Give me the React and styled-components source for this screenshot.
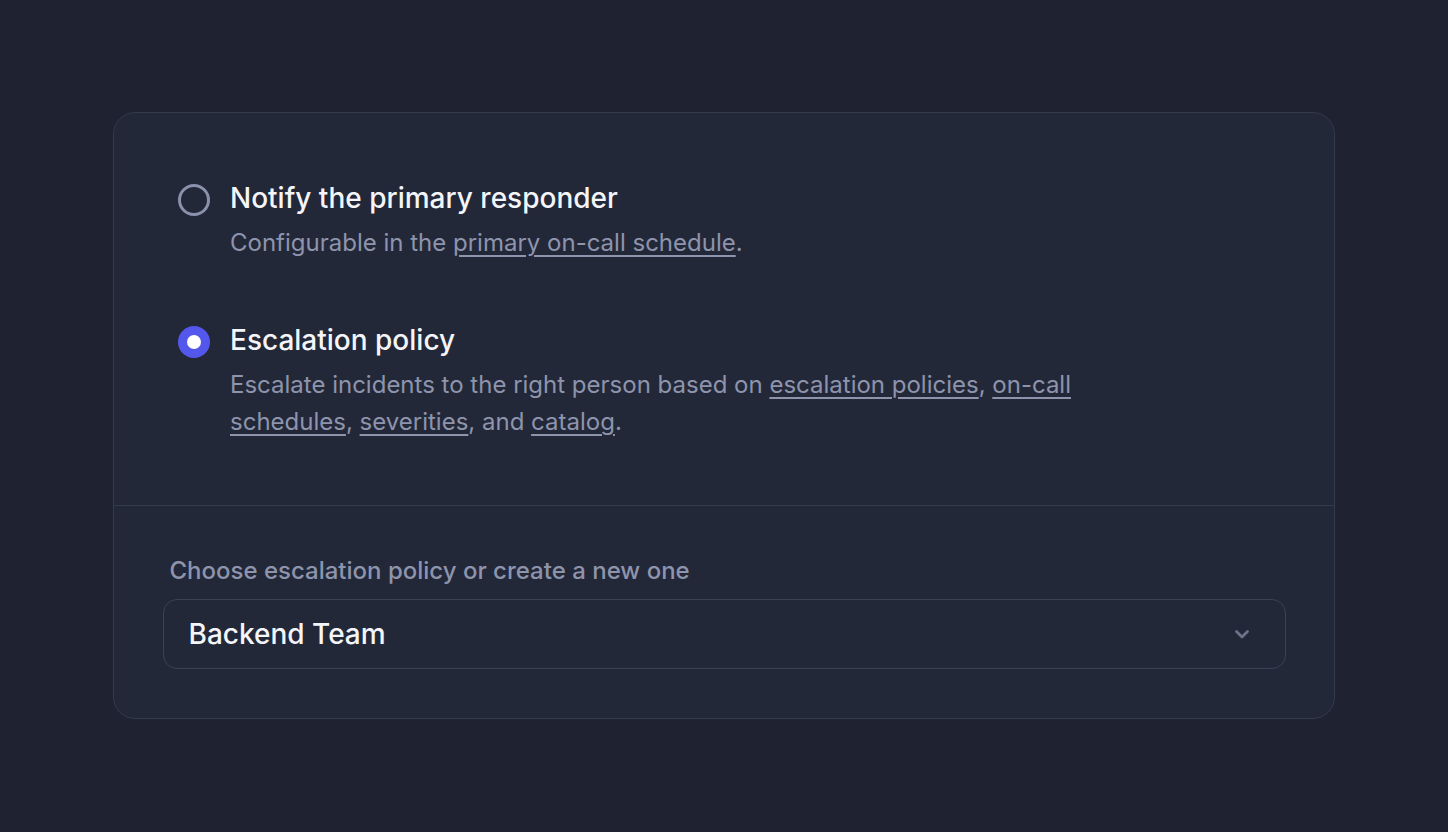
import React from "react";
import styled, { createGlobalStyle } from "styled-components";

const Global = createGlobalStyle`
  html, body { margin: 0; padding: 0; background: #1e2231; }
  body { font-family: Inter, "Noto Sans", sans-serif; -webkit-font-smoothing: antialiased; }
`;

const Page = styled.div`
  min-height: 832px;
  display: flex;
  align-items: flex-start;
  justify-content: center;
  padding-top: 112px;
  box-sizing: border-box;
`;

const Card = styled.div`
  width: 1222px;
  box-sizing: border-box;
  background: #232839;
  border: 1.5px solid #333a4c;
  border-radius: 22px;
  overflow: hidden;
`;

const Options = styled.div`
  display: flex;
  flex-direction: column;
  gap: 61px;
  padding: 67px 64px 65px;
  border-bottom: 1.5px solid #333a4c;
`;

const Option = styled.div`
  display: grid;
  grid-template-columns: 32px 1fr;
  column-gap: 20px;
`;

const Radio = styled.span`
  width: 32px;
  height: 32px;
  box-sizing: border-box;
  border-radius: 50%;
  margin-top: 4px;
  display: flex;
  align-items: center;
  justify-content: center;
  border: ${(p) => (p.$checked ? "none" : "3.5px solid #8a91aa")};
  background: ${(p) => (p.$checked ? "#5457eb" : "transparent")};
  &::after {
    content: "";
    display: ${(p) => (p.$checked ? "block" : "none")};
    width: 14px;
    height: 14px;
    border-radius: 50%;
    background: #ffffff;
  }
`;

const Title = styled.div`
  font-size: 28px;
  line-height: 36px;
  font-weight: 500;
  color: #f4f5f8;
`;

const Desc = styled.div`
  font-size: 24px;
  line-height: 37px;
  color: #8d94ac;
  margin-top: 8px;
  max-width: 860px;
`;

const Link = styled.a`
  color: #8d94ac;
  text-decoration: underline;
  text-underline-offset: 4px;
  text-decoration-thickness: 1.5px;
`;

const Bottom = styled.div`
  display: flex;
  flex-direction: column;
  gap: 12px;
  padding: 49px 48.5px 49px;
`;

const Label = styled.div`
  font-size: 24px;
  line-height: 32px;
  color: #8d94ac;
  padding-left: 7px;
  font-weight: 500;
`;

const Select = styled.div`
  height: 70px;
  box-sizing: border-box;
  border: 1.5px solid #3b4254;
  border-radius: 14px;
  display: flex;
  align-items: center;
  justify-content: space-between;
  padding: 0 33px 0 25px;
`;

const SelectValue = styled.span`
  font-size: 28px;
  color: #f4f5f8;
  font-weight: 500;
`;

const Chevron = () => (
  <svg width="20" height="20" viewBox="0 0 20 20" fill="none">
    <path d="M4.5 7.5 L10 13 L15.5 7.5" stroke="#6c7389" strokeWidth="2.8" strokeLinecap="round" strokeLinejoin="round" />
  </svg>
);

export default function App() {
  return (
    <>
      <Global />
      <Page>
        <Card>
          <Options>
            <Option>
              <Radio />
              <div>
                <Title>Notify the primary responder</Title>
                <Desc>
                  Configurable in the <Link>primary on-call schedule</Link>.
                </Desc>
              </div>
            </Option>
            <Option>
              <Radio $checked />
              <div>
                <Title>Escalation policy</Title>
                <Desc>
                  Escalate incidents to the right person based on <Link>escalation policies</Link>, <Link>on-call schedules</Link>, <Link>severities</Link>, and <Link>catalog</Link>.
                </Desc>
              </div>
            </Option>
          </Options>
          <Bottom>
            <Label>Choose escalation policy or create a new one</Label>
            <Select>
              <SelectValue>Backend Team</SelectValue>
              <Chevron />
            </Select>
          </Bottom>
        </Card>
      </Page>
    </>
  );
}
